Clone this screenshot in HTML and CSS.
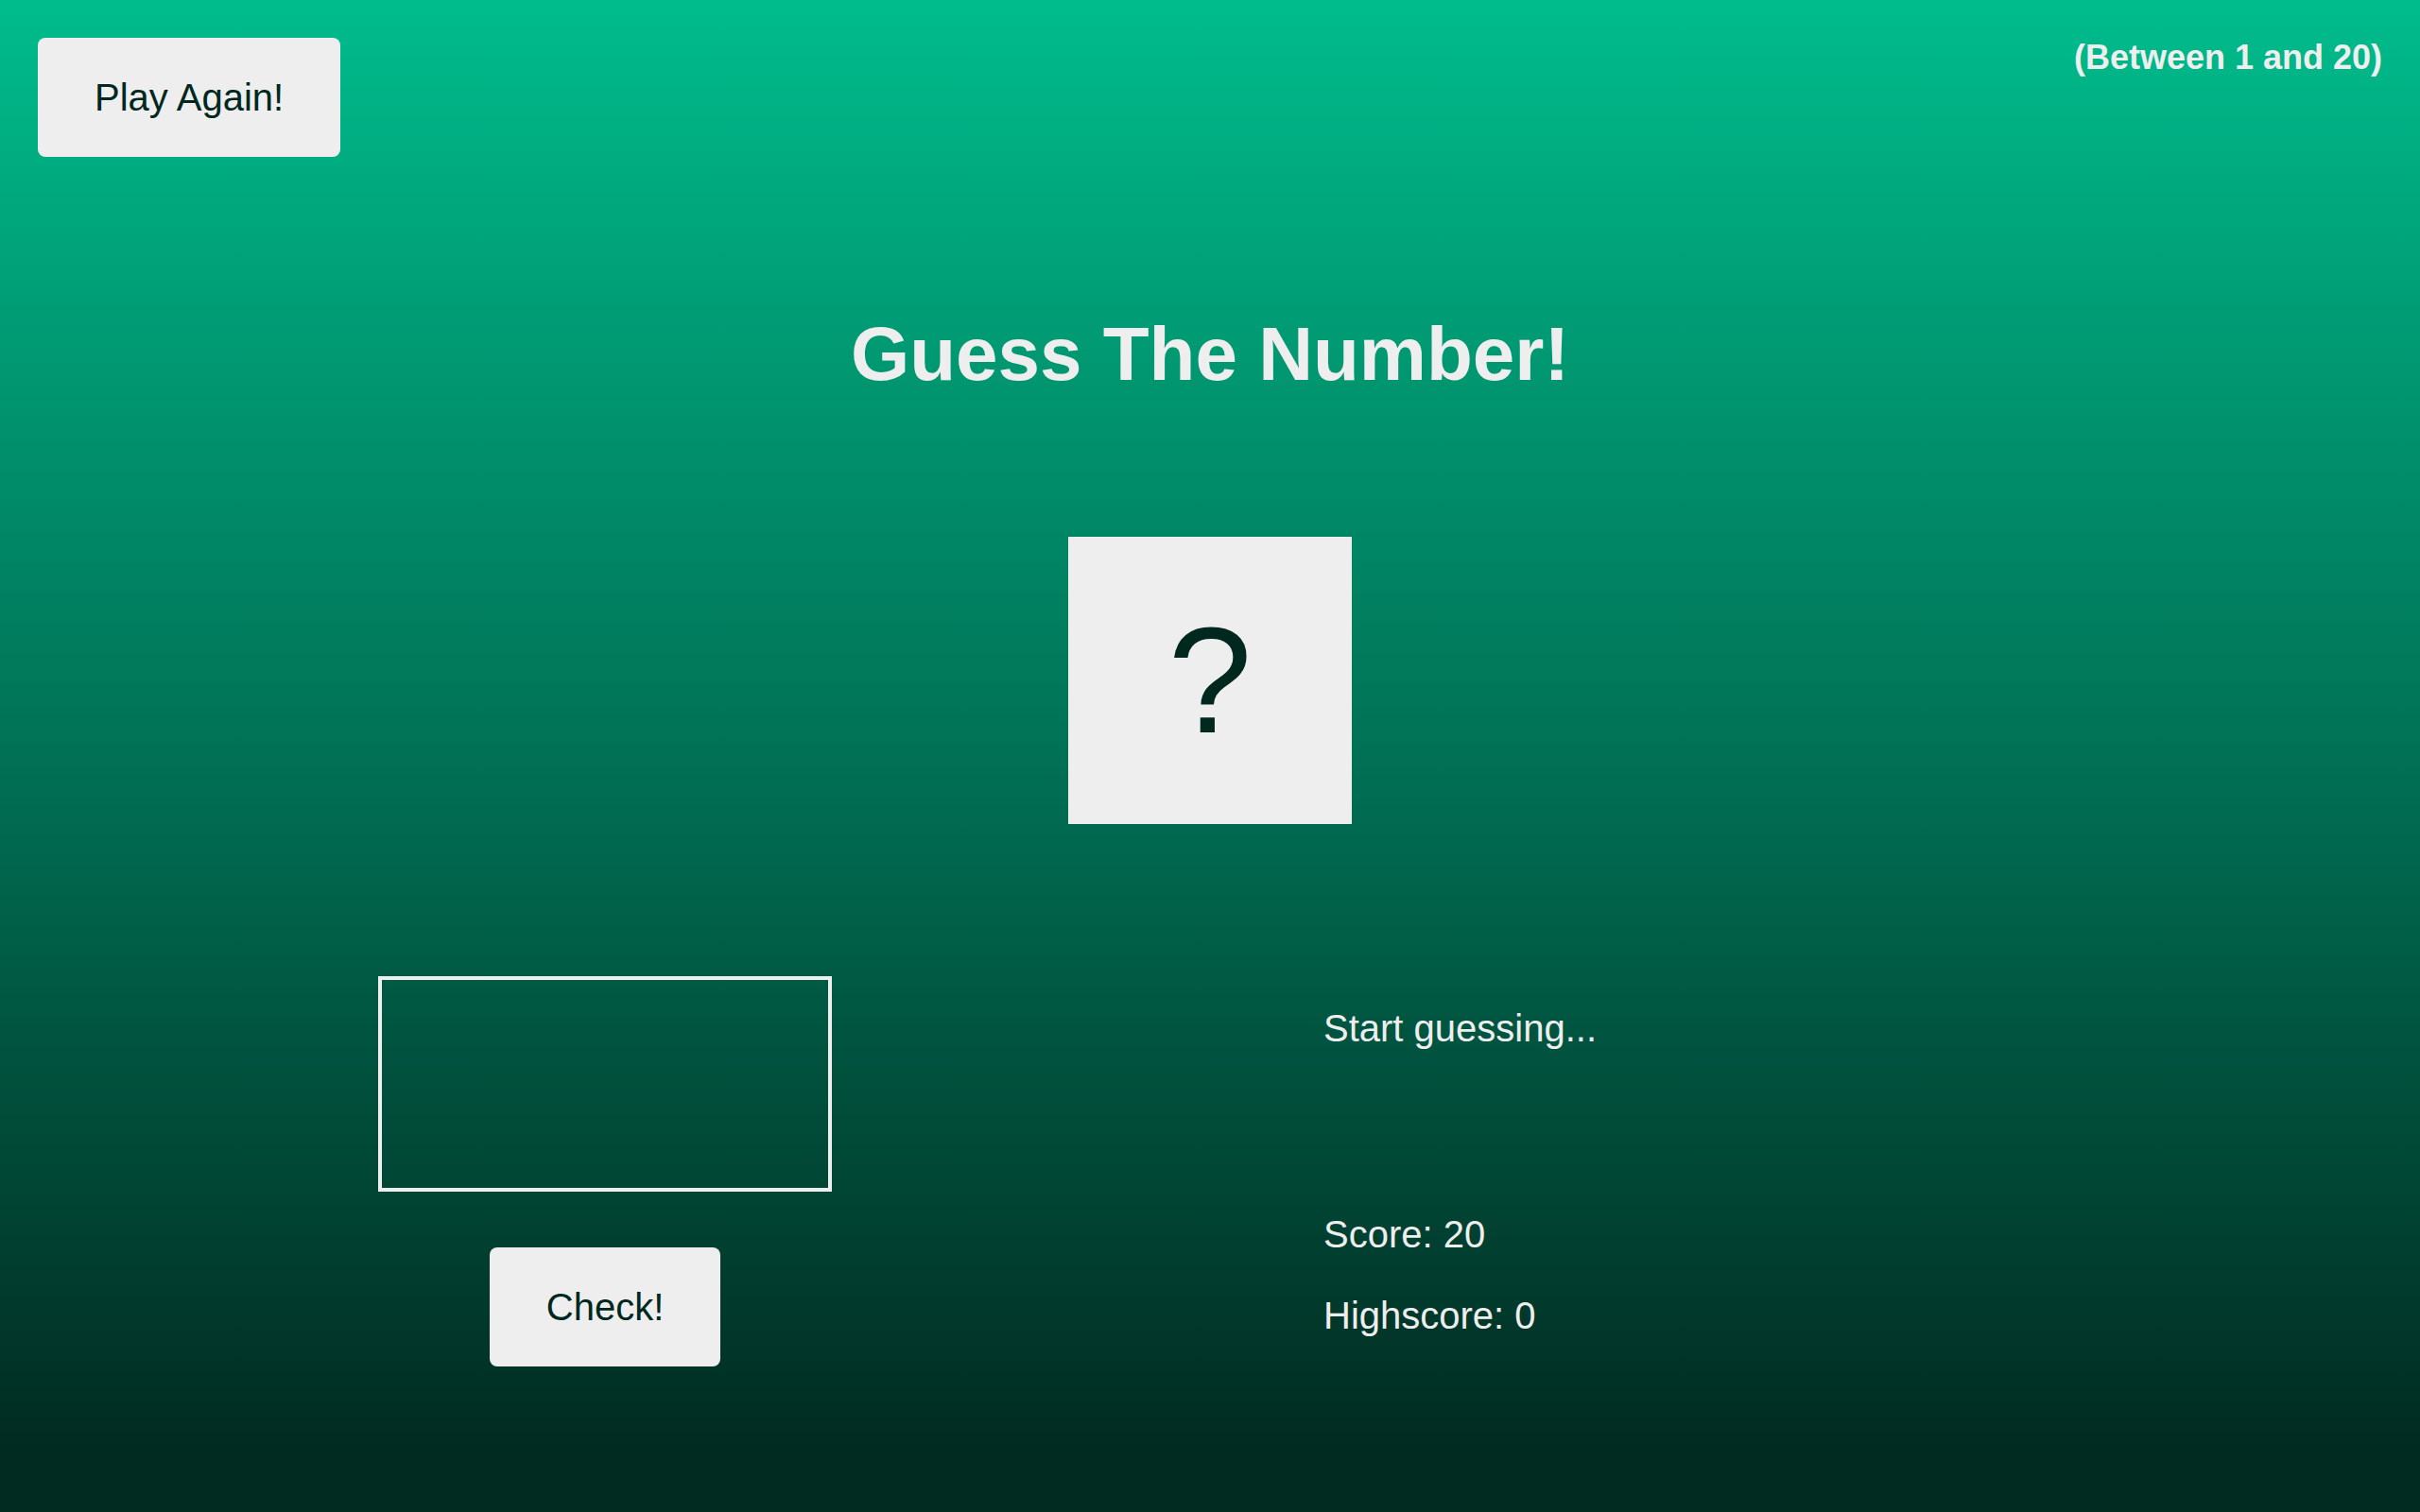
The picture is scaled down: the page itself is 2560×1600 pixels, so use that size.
FILE: index.html
```html
<!DOCTYPE html>
<html lang="en">
<head>
<meta charset="utf-8">
<title>Guess The Number!</title>
<link rel="stylesheet" href="styles.css">
</head>
<body>
  <header class="top">
    <button class="btn again">Play Again!</button>
    <p class="between">(Between 1 and 20)</p>
  </header>
  <h1 class="title">Guess The Number!</h1>
  <div class="number">?</div>
  <main class="game">
    <section class="left">
      <input type="number" class="guess">
      <button class="btn check">Check!</button>
    </section>
    <section class="right">
      <p class="message">Start guessing...</p>
      <p class="label-score">Score: <span class="score">20</span></p>
      <p class="label-highscore">Highscore: <span class="highscore">0</span></p>
    </section>
  </main>
</body>
</html>
```
FILE: styles.css
```css
* {
  margin: 0;
  padding: 0;
  box-sizing: border-box;
}

html {
  background: #012a20;
}

body {
  min-height: 100vh;
  font-family: "Liberation Sans", Arial, sans-serif;
  color: #eeeeee;
  background: linear-gradient(to bottom, #00bc8c 0px, #012a20 1545px) no-repeat;
  background-color: #012a20;
}

.top {
  display: flex;
  justify-content: space-between;
  align-items: flex-start;
  padding: 40px 40px 0 40px;
}

.btn {
  border: none;
  background: #eeeeee;
  color: #00281e;
  font-family: inherit;
  font-size: 40px;
  line-height: 46px;
  padding: 40px 60px;
  border-radius: 8px;
  cursor: pointer;
}

.between {
  font-size: 36px;
  font-weight: bold;
  line-height: 41px;
}

.title {
  margin-top: 163px;
  text-align: center;
  font-size: 80px;
  font-weight: bold;
  line-height: 92px;
}

.number {
  width: 300px;
  margin: 147px auto 0;
  padding: 60px 0;
  background: #eeeeee;
  color: #00281e;
  font-size: 160px;
  line-height: 184px;
  text-align: center;
}

.game {
  display: flex;
  justify-content: space-around;
  align-items: center;
  margin-top: 161px;
}

.left {
  width: 1040px;
  display: flex;
  flex-direction: column;
  align-items: center;
}

.guess {
  display: block;
  width: 480px;
  height: 228px;
  background: none;
  border: 4px solid #eeeeee;
  color: inherit;
  font-family: inherit;
  font-size: 100px;
  text-align: center;
  outline: none;
  -moz-appearance: textfield;
}

.guess::-webkit-outer-spin-button,
.guess::-webkit-inner-spin-button {
  -webkit-appearance: none;
  margin: 0;
}

.check {
  margin-top: 59px;
}

.right {
  width: 1040px;
  font-size: 40px;
  line-height: 46px;
}

.message {
  height: 60px;
  margin-bottom: 158px;
}

.label-score {
  margin-bottom: 40px;
}
```
